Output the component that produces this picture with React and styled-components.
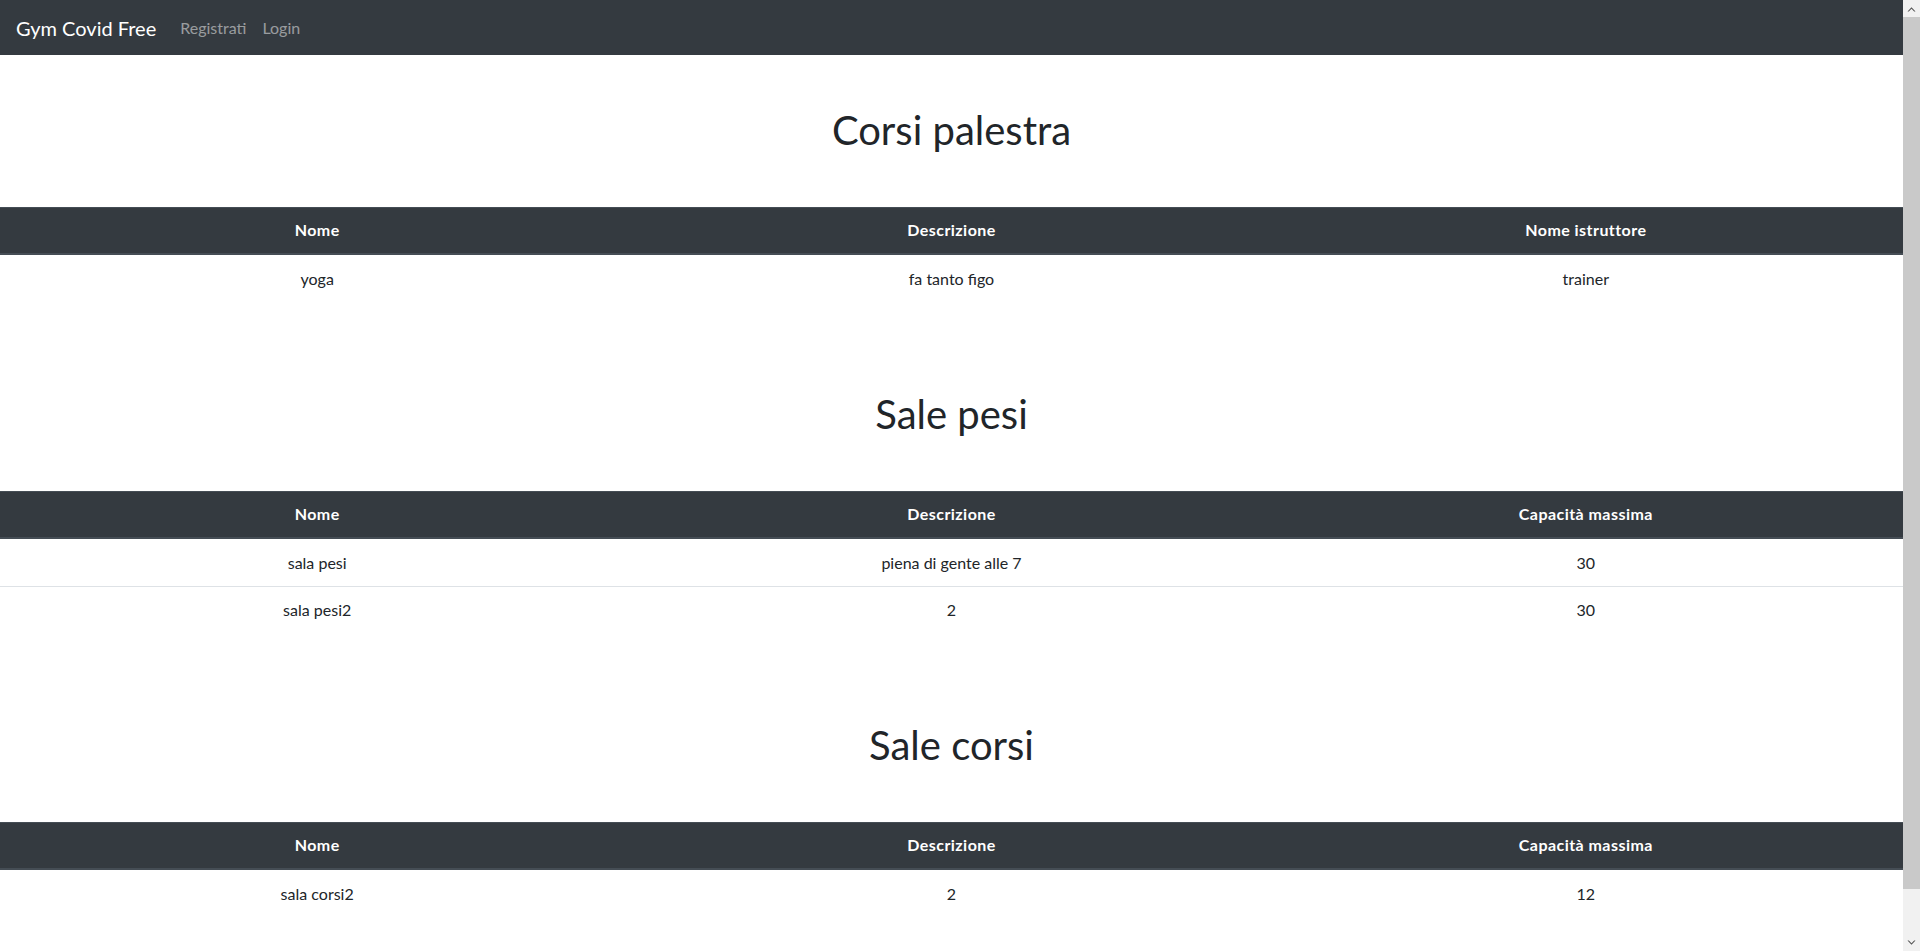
import React from "react";
import styled, { createGlobalStyle } from "styled-components";

const GlobalStyle = createGlobalStyle`
  html, body { margin: 0; padding: 0; }
  body {
    font-family: Lato, "Liberation Sans", sans-serif;
    font-size: 16px;
    line-height: 1.5;
    color: #212529;
    background: #fff;
  }
  *, *::before, *::after { box-sizing: border-box; }
`;

const Page = styled.div`
  margin-right: 17px;
`;

const Navbar = styled.nav`
  display: flex;
  align-items: center;
  height: 55px;
  padding: 8px 16px;
  background: #343a40;
`;

const Brand = styled.a`
  font-size: 20px;
  line-height: 30px;
  padding: 5px 0;
  margin-right: 16px;
  color: #fff;
  text-decoration: none;
  white-space: nowrap;
`;

const NavList = styled.div`
  display: flex;
`;

const NavLink = styled.a`
  display: block;
  padding: 8px;
  line-height: 24px;
  color: rgba(255, 255, 255, 0.5);
  text-decoration: none;
`;

const Section = styled.section`
  display: flex;
  flex-direction: column;
  padding: 49px 0 37px;
  &:last-of-type { padding-bottom: 80px; }
`;

const Title = styled.h1`
  margin: 0 0 53px;
  padding-top: 2px;
  font-size: 40px;
  line-height: 48px;
  font-weight: 400;
  text-align: center;
  color: #212529;
`;

const Table = styled.table`
  width: 100%;
  table-layout: fixed;
  border-collapse: separate;
  border-spacing: 0;
  text-align: center;
`;

const Th = styled.th`
  padding: 10px 12px 11px;
  line-height: 24px;
  font-weight: 700;
  letter-spacing: 0.45px;
  color: #fff;
  background: #343a40;
  border-top: 1px solid #454d55;
  border-bottom: 2px solid #454d55;
`;

const Tr = styled.tr`
  &:first-child td { border-top-color: transparent; }
`;

const Td = styled.td`
  padding: 11px 12px;
  line-height: 24px;
  border-top: 1px solid #dee2e6;
  color: #212529;
`;

/* imitation of the browser's classic scrollbar, lying over the page edge */
const Scrollbar = styled.div`
  position: fixed;
  top: 0;
  right: 0;
  width: 17px;
  height: 100vh;
  display: flex;
  flex-direction: column;
  background: #f1f1f1;
`;

const ScrollButton = styled.div`
  height: 17px;
  flex: none;
  display: flex;
  align-items: center;
  justify-content: center;
  background: #f1f1f1;
`;

const Thumb = styled.div`
  height: 872px;
  flex: none;
  background: #c9c9c9;
`;

const Track = styled.div`
  flex: 1;
`;

const Chevron = ({ down }) => (
  <svg width="9" height="6" viewBox="0 0 9 6" style={down ? { transform: "rotate(180deg)" } : undefined}>
    <path d="M0.5 5.5 L4.5 1.2 L8.5 5.5 L7.2 5.5 L4.5 2.8 L1.8 5.5 Z" fill="#505050" />
  </svg>
);

const sections = [
  {
    title: "Corsi palestra",
    cols: ["Nome", "Descrizione", "Nome istruttore"],
    rows: [["yoga", "fa tanto figo", "trainer"]],
  },
  {
    title: "Sale pesi",
    cols: ["Nome", "Descrizione", "Capacità massima"],
    rows: [
      ["sala pesi", "piena di gente alle 7", "30"],
      ["sala pesi2", "2", "30"],
    ],
  },
  {
    title: "Sale corsi",
    cols: ["Nome", "Descrizione", "Capacità massima"],
    rows: [["sala corsi2", "2", "12"]],
  },
];

export default function App() {
  return (
    <>
      <GlobalStyle />
      <Page>
        <Navbar>
          <Brand href="#">Gym Covid Free</Brand>
          <NavList>
            <NavLink href="#">Registrati</NavLink>
            <NavLink href="#">Login</NavLink>
          </NavList>
        </Navbar>
        {sections.map((s) => (
          <Section key={s.title}>
            <Title>{s.title}</Title>
            <Table>
              <thead>
                <tr>
                  {s.cols.map((c) => (
                    <Th key={c}>{c}</Th>
                  ))}
                </tr>
              </thead>
              <tbody>
                {s.rows.map((r, i) => (
                  <Tr key={i}>
                    {r.map((v, j) => (
                      <Td key={j}>{v}</Td>
                    ))}
                  </Tr>
                ))}
              </tbody>
            </Table>
          </Section>
        ))}
      </Page>
      <Scrollbar>
        <ScrollButton>
          <Chevron />
        </ScrollButton>
        <Thumb />
        <Track />
        <ScrollButton>
          <Chevron down />
        </ScrollButton>
      </Scrollbar>
    </>
  );
}
